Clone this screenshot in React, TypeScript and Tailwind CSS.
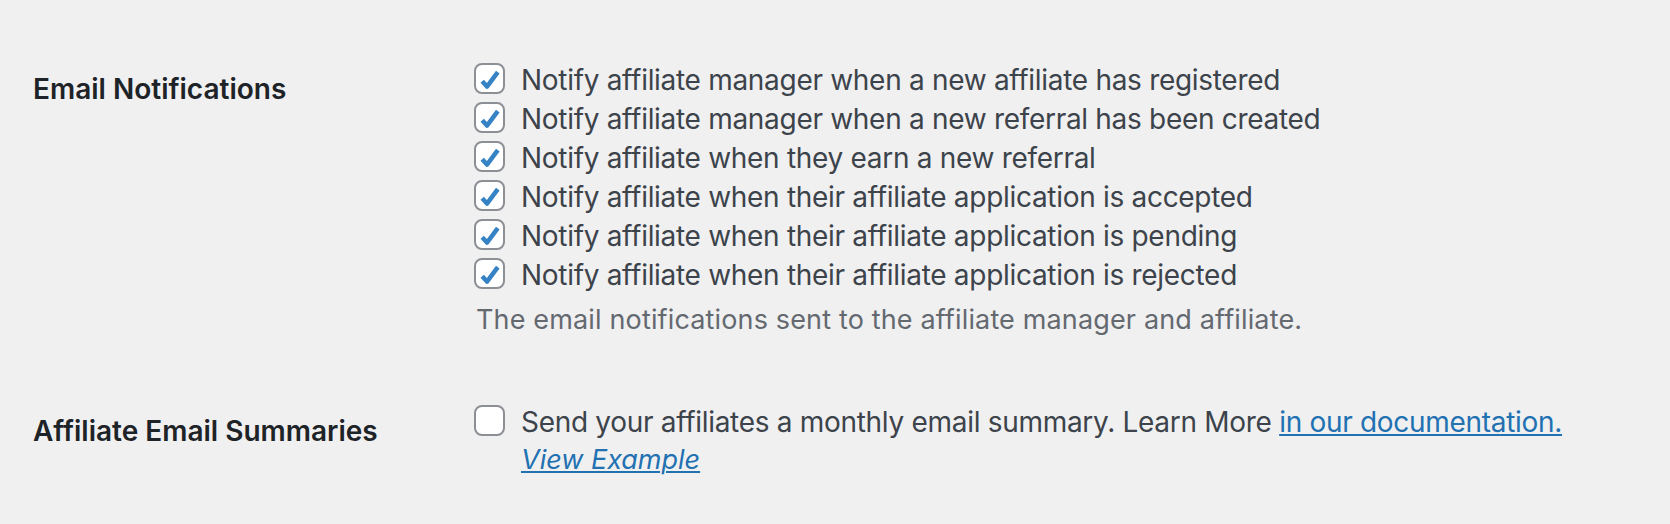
import React from 'react';

const notifications = [
  'Notify affiliate manager when a new affiliate has registered',
  'Notify affiliate manager when a new referral has been created',
  'Notify affiliate when they earn a new referral',
  'Notify affiliate when their affiliate application is accepted',
  'Notify affiliate when their affiliate application is pending',
  'Notify affiliate when their affiliate application is rejected',
];

const Checkbox: React.FC<{ checked?: boolean }> = ({ checked }) => (
  <span className="relative mt-[2px] block w-[31px] h-[31px] shrink-0 rounded-[8px] border-2 border-[#8c8f94] bg-white">
    {checked && (
      <svg
        viewBox="0 0 31 31"
        className="absolute left-[-2px] top-[-2px] w-[31px] h-[31px]"
        fill="none"
        stroke="#3582c4"
        strokeWidth="4.5"
        strokeLinejoin="round"
      >
        <path d="M8.2 18.2L13 23.6L23.8 9.2" />
      </svg>
    )}
  </span>
);

const Row: React.FC<{ label: string; children: React.ReactNode }> = ({ label, children }) => (
  <div className="flex items-start">
    <div className="w-[441px] shrink-0 pt-[9px] text-[28px] leading-[39px] font-semibold text-[#1d2327]">
      {label}
    </div>
    <div className="flex-1">{children}</div>
  </div>
);

export default function App() {
  return (
    <div className="w-full h-[524px] overflow-hidden bg-[#f0f0f1] pl-[33px] pt-[61px] font-['Inter','Noto_Sans',sans-serif]">
      <Row label="Email Notifications">
        <div className="flex flex-col">
          {notifications.map((text) => (
            <label key={text} className="flex items-start gap-[16px] text-[28px] leading-[39px] tracking-[-0.3px] text-[#3c434a]">
              <Checkbox checked />
              <span>{text}</span>
            </label>
          ))}
        </div>
        <p className="mt-[7px] pl-[2px] text-[27px] leading-[36px] tracking-[0.15px] text-[#646970]">
          The email notifications sent to the affiliate manager and affiliate.
        </p>
      </Row>

      <div className="mt-[65px]">
        <Row label="Affiliate Email Summaries">
          <label className="flex items-start gap-[16px] text-[28px] leading-[39px] tracking-[-0.3px] text-[#3c434a]">
            <Checkbox />
            <span>
              Send your affiliates a monthly email summary. Learn More{' '}
              <a href="#" className="text-[#2271b1] underline decoration-2 underline-offset-[2px]">
                in our documentation.
              </a>
              <span className="block text-[27px] leading-[36px] tracking-normal">
                <a href="#" className="italic text-[#2271b1] underline decoration-2 underline-offset-[2px]">
                  View Example
                </a>
              </span>
            </span>
          </label>
        </Row>
      </div>
    </div>
  );
}
